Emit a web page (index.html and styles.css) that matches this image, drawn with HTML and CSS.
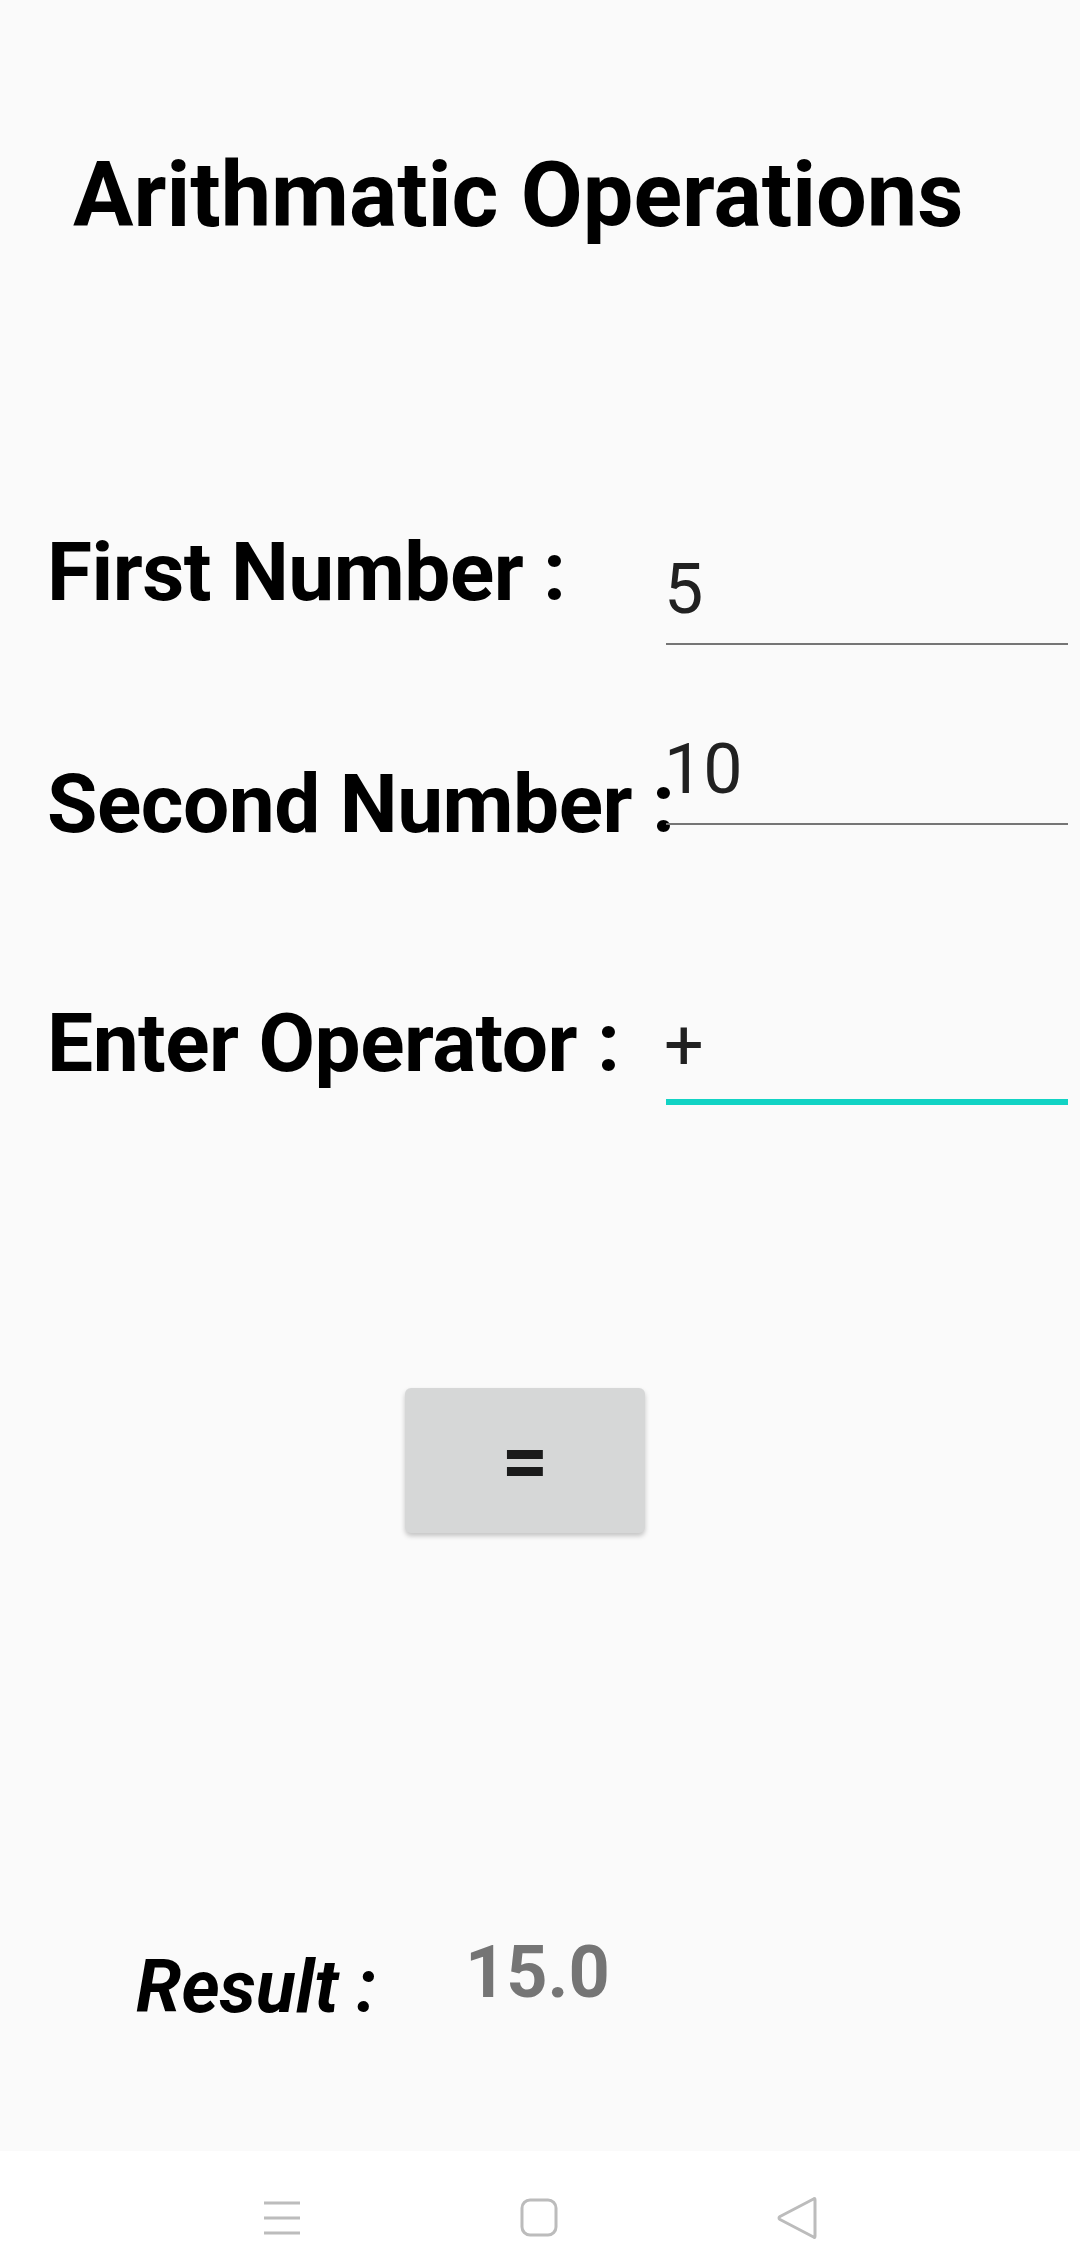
FILE: index.html
```html
<!DOCTYPE html>
<html lang="en">
<head>
<meta charset="utf-8">
<title>Arithmatic Operations</title>
<link rel="stylesheet" href="styles.css">
</head>
<body>
<div class="screen">
  <main class="content">
    <h1 class="title">Arithmatic Operations</h1>

    <div class="row row-first">
      <div class="label">First Number :</div>
      <div class="field"><span class="field-text">5</span></div>
    </div>

    <div class="row row-second">
      <div class="label">Second Number :</div>
      <div class="field"><span class="field-text">10</span></div>
    </div>

    <div class="row row-operator">
      <div class="label">Enter Operator :</div>
      <div class="field field-focused"><span class="field-text">+</span></div>
    </div>

    <div class="button-wrap">
      <button class="equals-btn" type="button">=</button>
    </div>

    <div class="result-row">
      <span class="result-label">Result :</span>
      <span class="result-value">15.0</span>
    </div>
  </main>

  <nav class="navbar">
    <div class="nav-slot">
      <svg width="38" height="34" viewBox="0 0 38 34">
        <g stroke="#bcbcbc" stroke-width="3">
          <line x1="1" y1="2" x2="37" y2="2"/>
          <line x1="1" y1="17" x2="37" y2="17"/>
          <line x1="1" y1="32" x2="37" y2="32"/>
        </g>
      </svg>
    </div>
    <div class="nav-slot">
      <svg width="40" height="40" viewBox="0 0 40 40">
        <rect x="2" y="2" width="34" height="35" rx="8" ry="8" fill="none" stroke="#bcbcbc" stroke-width="3"/>
      </svg>
    </div>
    <div class="nav-slot">
      <svg width="42" height="44" viewBox="0 0 42 44">
        <path d="M38 4 Q38 1.5 36.5 3 L3 20.5 Q1 22 3 23.5 L36.5 41 Q38 42.5 38 40 Z" fill="none" stroke="#bcbcbc" stroke-width="3" stroke-linejoin="round"/>
      </svg>
    </div>
  </nav>
</div>
</body>
</html>
```

FILE: styles.css
```css
html, body {
  margin: 0;
  padding: 0;
  background: #fafafa;
}

.screen {
  width: 1080px;
  height: 2266px;
  display: flex;
  flex-direction: column;
  font-family: Roboto, "Noto Sans", "Liberation Sans", sans-serif;
  color: #000;
}

.content {
  flex: 1;
  padding-left: 47px;
}

.title {
  margin: 143px 0 0 26px;
  font-size: 90px;
  font-weight: 700;
  line-height: normal;
  letter-spacing: 0;
}

.row {
  display: flex;
  align-items: flex-start;
}

.label {
  width: 619px;
  flex: none;
  font-size: 82px;
  font-weight: 700;
  line-height: normal;
  letter-spacing: -0.5px;
  white-space: nowrap;
}

.field {
  width: 402px;
  padding-bottom: 13px;
  border-bottom: 2px solid #757575;
}

.field-text {
  display: block;
  margin-left: -2px;
  font-size: 70px;
  line-height: normal;
  color: #212121;
}

.field-focused {
  border-bottom: 6px solid #11d3c4;
}

.row-first {
  margin-top: 276px;
}
.row-first .field {
  margin-top: 24px;
}

.row-second {
  margin-top: 83px;
}
.row-second .label {
  margin-top: 28px;
}

.row-operator {
  margin-top: 143px;
}
.row-operator .field {
  margin-top: 9px;
}

.button-wrap {
  display: flex;
  margin-top: 283px;
  padding-left: 358px;
}

.equals-btn {
  width: 240px;
  height: 145px;
  border: none;
  border-radius: 6px;
  background: #d6d7d7;
  box-shadow: 0 3px 5px rgba(0, 0, 0, 0.22);
  font-family: Roboto, "Noto Sans", sans-serif;
  font-size: 82px;
  font-weight: 700;
  color: #1b1b1b;
  padding: 0;
}

.result-row {
  display: flex;
  align-items: flex-start;
  margin-top: 397px;
  padding-left: 89px;
}

.result-label {
  margin-top: 14px;
  width: 329px;
  font-size: 73px;
  font-weight: 700;
  font-style: italic;
  line-height: normal;
}

.result-value {
  font-size: 72px;
  font-weight: 700;
  line-height: normal;
  color: #757575;
}

.navbar {
  height: 115px;
  box-sizing: border-box;
  padding-top: 18px;
  background: #ffffff;
  display: flex;
  justify-content: center;
  align-items: center;
}

.nav-slot {
  width: 258px;
  display: flex;
  justify-content: center;
  align-items: center;
}
```
